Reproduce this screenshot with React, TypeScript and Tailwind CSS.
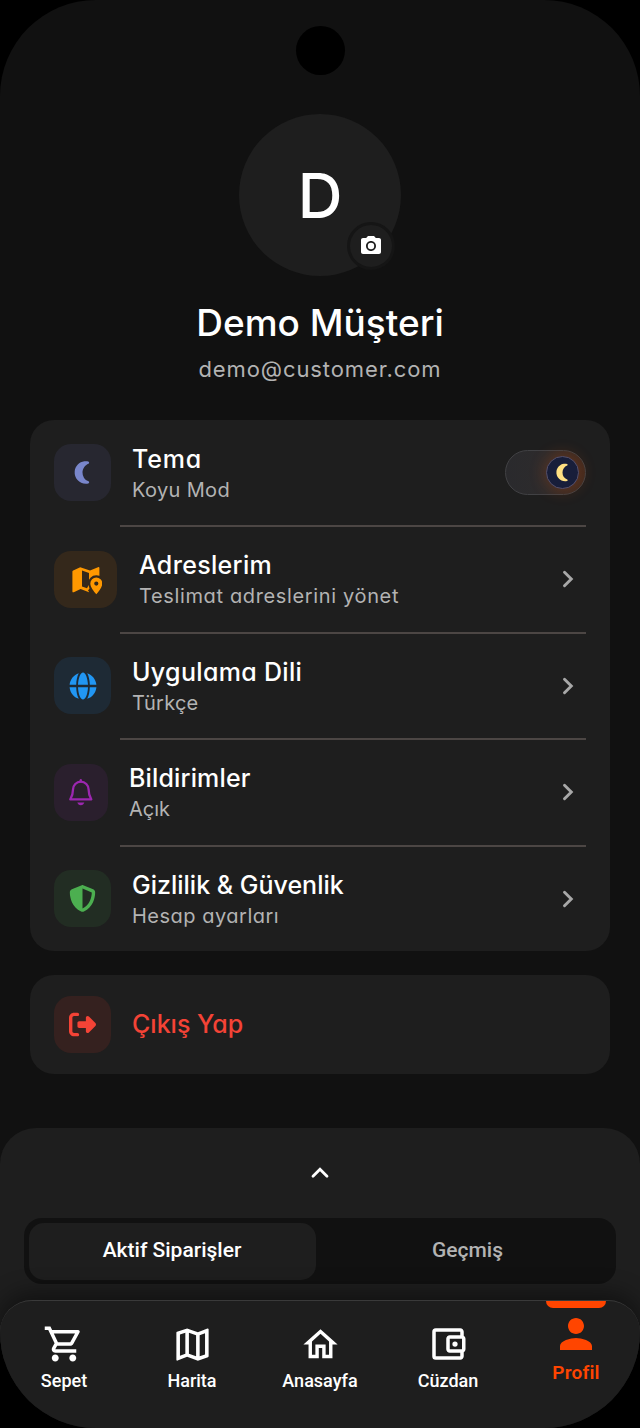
import type { ReactNode } from "react";
import { FaShieldHalved, FaRightFromBracket } from "react-icons/fa6";
import {
  MdCameraAlt,
  MdNightlightRound,
  MdOutlineAccountBalanceWallet,
  MdOutlineHome,
  MdOutlineMap,
  MdOutlineShoppingCart,
  MdPerson,
} from "react-icons/md";

/* ================= ICONS ================= */

const GlobeIcon = () => (
  <svg width="28" height="28" viewBox="0 0 28 28" fill="currentColor">
    <path d="M9 12.8C9.3 6 11.5.5 14 .5s4.700 5.500 5 12.300ZM9 15.200h10C18.700 22 16.500 27.500 14 27.500S9.300 22 9 15.200ZM7.200 12.800H.6C1.100 7.300 4.800 2.800 9.800 1.200 8.200 4 7.300 8.200 7.200 12.800ZM7.200 15.200c.1 4.600 1 8.800 2.600 11.600C4.800 25.200 1.100 20.700.6 15.200ZM20.800 12.800c-.1-4.600-1-8.800-2.600-11.600 5 1.600 8.700 6.100 9.200 11.600ZM20.800 15.200h6.600c-.5 5.500-4.200 10-9.200 11.600 1.600-2.800 2.500-7 2.600-11.600Z" />
  </svg>
);

const MapPinIcon = () => (
  <svg width="33" height="32" viewBox="-3 -3 33 32" fill="currentColor">
    <path d="M.4 5.600Q.4 4.800 1.200 4.400L8.200 1.200 18 4.600 26 1.200Q27.400.7 27.400 2V22L17 26.200 8.600 23 1.800 26.200Q.4 26.700.4 25.400Z" />
    <path d="M10 4.600 17 7V18.500L15 22.300 10 20.500Z" fill="#34281b" />
    <path d="M16 17.500a8.300 8.300 0 0 1 16.600 0V30H20l-4-5.500 1.500-2Z" fill="#34281b" />
    <path
      fillRule="evenodd"
      d="M24.300 11.500a6 6 0 0 1 6 6c0 3.400-3.200 7.500-6 10.800-2.800-3.300-6-7.400-6-10.800a6 6 0 0 1 6-6Zm0 4a2.100 2.100 0 1 0 0 4.200 2.100 2.100 0 0 0 0-4.200Z"
    />
  </svg>
);

const BellIcon = () => (
  <svg width="24" height="27" viewBox="0 0 24 27" fill="none" stroke="currentColor" strokeWidth="2.300">
    <path d="M1.300 20.400c1.700-2.700 2.700-5.600 2.700-9.900a7.800 7.800 0 0 1 15.600 0c0 4.300 1 7.200 2.700 9.900Z" strokeLinejoin="round" />
    <path d="M11.800 2.700V1.200" strokeLinecap="round" />
    <path d="M8.300 23.600h7c-.5 1.700-1.700 2.600-3.500 2.600s-3-.9-3.500-2.600Z" fill="currentColor" stroke="none" />
  </svg>
);

const ChevronRight = () => (
  <svg className="mr-[12px]" width="12" height="18" viewBox="0 0 12 18" fill="none" stroke="#a8a8a8" strokeWidth="2.900" strokeLinecap="round">
    <path d="m2.500 2.200 6.800 6.800-6.800 6.800" />
  </svg>
);

const ThemeToggle = () => (
  <div className="w-[81px] h-[45px] rounded-full border border-[#414144] bg-linear-to-r from-[#2a2a2d] via-[#2d2b2c] to-[#3e291f] flex items-center justify-end pr-[6.5px]">
    <div className="size-[33px] rounded-full bg-[#181e3a] border border-[#55506b] shadow-[0_0_16px_2px_rgba(255,90,10,0.22)] flex items-center justify-center text-[#ffe082]">
      <MdNightlightRound size={21} />
    </div>
  </div>
);

/* ================= DATA ================= */

type Item = {
  title: string;
  subtitle: string;
  icon: ReactNode;
  box: string;
  titleClass: string;
  subClass: string;
};

const items: Item[] = [
  {
    title: "Tema",
    subtitle: "Koyu Mod",
    icon: <MdNightlightRound size={27} />,
    box: "w-[57px] mr-[21px] bg-[#272730] text-[#7986cb]",
    titleClass: "tracking-[0.8px]",
    subClass: "tracking-[0.35px]",
  },
  {
    title: "Adreslerim",
    subtitle: "Teslimat adreslerini yönet",
    icon: <MapPinIcon />,
    box: "w-[63px] mr-[22px] bg-[#34281b] text-[#ff9800]",
    titleClass: "tracking-[0.33px]",
    subClass: "tracking-[0.64px]",
  },
  {
    title: "Uygulama Dili",
    subtitle: "Türkçe",
    icon: <GlobeIcon />,
    box: "w-[57px] mr-[21px] bg-[#1e2a35] text-[#2196f3]",
    titleClass: "tracking-[0.33px]",
    subClass: "tracking-[0.2px]",
  },
  {
    title: "Bildirimler",
    subtitle: "Açık",
    icon: <BellIcon />,
    box: "w-[54px] mr-[21px] bg-[#2a1f2d] text-[#9c27b0]",
    titleClass: "tracking-[0.15px]",
    subClass: "tracking-normal",
  },
  {
    title: "Gizlilik & Güvenlik",
    subtitle: "Hesap ayarları",
    icon: <FaShieldHalved size={27} />,
    box: "w-[57px] mr-[21px] bg-[#222d23] text-[#4caf50]",
    titleClass: "tracking-normal",
    subClass: "tracking-[0.5px]",
  },
];

const navItems = [
  { label: "Sepet", icon: <MdOutlineShoppingCart size={42} /> },
  { label: "Harita", icon: <MdOutlineMap size={43} /> },
  { label: "Anasayfa", icon: <MdOutlineHome size={41} /> },
  { label: "Cüzdan", icon: <MdOutlineAccountBalanceWallet size={42} /> },
];

/* ================= UI ================= */

export default function App() {
  return (
    <div className="w-[640px] h-[1428px] bg-black text-white font-['Inter',sans-serif] [font-feature-settings:'cv11']">
      <div className="flex flex-col h-full bg-[#111111] rounded-[96px] overflow-hidden">
        {/* CAMERA HOLE */}
        <div className="mt-[26px] size-[49px] shrink-0 rounded-full bg-black self-center" />

        {/* HEADER */}
        <div className="relative mt-[39px] size-[162px] shrink-0 rounded-full bg-[#1e1e1e] self-center flex items-center justify-center text-[62px] font-medium">
          D
          <div className="absolute left-[108px] top-[108px] size-[48px] rounded-full border-3 border-[#151515] bg-[#1e1e1e] flex items-center justify-center">
            <MdCameraAlt size={24} />
          </div>
        </div>
        <h1 className="mt-[23px] h-[48px] leading-[48px] text-[37px] font-medium text-center">Demo Müşteri</h1>
        <p className="mt-[6px] h-[32px] leading-[32px] text-[22px] text-center text-[#b3b3b3] tracking-[0.9px]">demo@customer.com</p>

        {/* SETTINGS */}
        <div className="mt-[35px] mx-[30px] shrink-0 rounded-3xl bg-[#1e1e1e] px-6">
          {items.map((item, i) => (
            <div key={item.title}>
              {i > 0 && <div className="ml-[66px] h-[2px] -mb-[0.5px] bg-[#4c4644]" />}
              <div className="flex items-center h-[105px]">
                <div className={`h-[57px] shrink-0 rounded-[17px] flex items-center justify-center ${item.box}`}>{item.icon}</div>
                <div className="flex-1 flex flex-col pt-[3px]">
                  <span className={`text-[25px] font-medium leading-8 ${item.titleClass}`}>{item.title}</span>
                  <span className={`text-[20px] leading-[31px] text-[#b3b3b3] ${item.subClass}`}>{item.subtitle}</span>
                </div>
                {i === 0 ? <ThemeToggle /> : <ChevronRight />}
              </div>
            </div>
          ))}
        </div>

        {/* LOGOUT */}
        <div className="mt-[24px] mx-[30px] h-[99px] shrink-0 rounded-3xl bg-[#1e1e1e] px-6 flex items-center text-[#f44336]">
          <div className="size-[57px] mr-[21px] rounded-[17px] bg-[#35211f] flex items-center justify-center pr-px">
            <FaRightFromBracket size={27} />
          </div>
          <span className="text-[25px] font-medium">Çıkış Yap</span>
        </div>

        {/* ORDERS SHEET */}
        <div className="mt-[54px] h-[232px] shrink-0 rounded-t-[36px] bg-[#1e1e1e] px-6 flex flex-col font-['Roboto',sans-serif]">
          <svg className="mt-[36px] self-center" width="20" height="16" viewBox="0 0 20 16" fill="none" stroke="white" strokeWidth="2.800" strokeLinecap="round">
            <path d="m3 12.300 7-7 7 7" />
          </svg>
          <div className="mt-[38px] h-[66px] rounded-[18px] bg-[#111111] p-[4.5px] flex text-[21px] font-medium">
            <div className="w-[287px] rounded-[15px] bg-[#1e1e1e] flex items-center justify-center">Aktif Siparişler</div>
            <div className="flex-1 flex items-center justify-center text-[#b3b3b3] pl-2">Geçmiş</div>
          </div>
        </div>

        {/* BOTTOM NAV */}
        <nav className="-mt-[60px] relative h-[128px] shrink-0 rounded-t-[32px] border-t border-[#3a3a3a] bg-[#1e1e1e] shadow-[0_-6px_24px_rgba(0,0,0,0.45)] flex font-['Roboto',sans-serif] font-medium text-[18px]">
          {navItems.map((item) => (
            <div key={item.label} className="w-32 flex flex-col items-center">
              <div className="mt-[20px] h-[46px] flex items-center">{item.icon}</div>
              <span className="mt-[2px] leading-6">{item.label}</span>
            </div>
          ))}
          <div className="w-32 flex flex-col items-center text-[#ff4500]">
            <div className="w-[60px] h-[7px] rounded-b-[7px] bg-[#ff4500]" />
            <MdPerson className="mt-[2px]" size={48} />
            <span className="mt-[3px] leading-6 text-[19px] font-semibold tracking-[0.2px]">Profil</span>
          </div>
        </nav>
      </div>
    </div>
  );
}
